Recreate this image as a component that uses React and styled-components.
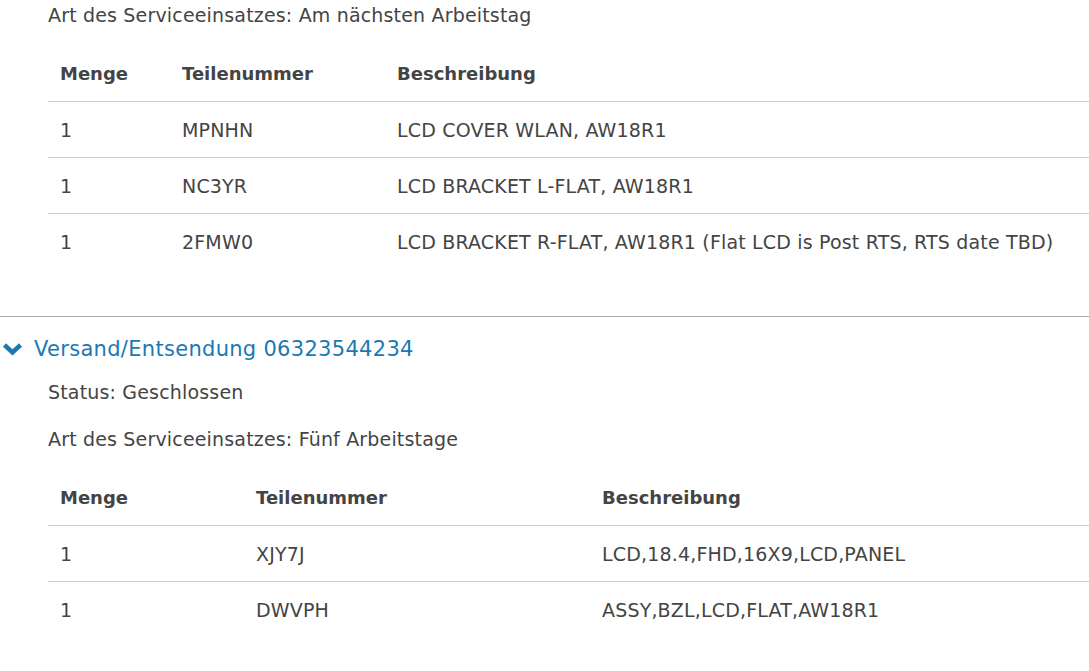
import React from 'react';
import styled, { createGlobalStyle } from 'styled-components';

const GlobalStyle = createGlobalStyle`
  html, body {
    margin: 0;
    padding: 0;
    background: #fff;
  }
  body {
    font-family: 'DejaVu Sans', 'Open Sans', sans-serif;
    font-size: 19px;
    letter-spacing: 0.17px;
    color: #444;
  }
`;

const Page = styled.div`
  width: 1089px;
  overflow: hidden;
`;

const Section = styled.section`
  border-bottom: ${(p) => (p.divider ? '1px solid #a9a9a9' : 'none')};
  padding-bottom: ${(p) => (p.divider ? '47px' : '0')};
`;

const Field = styled.p`
  margin: ${(p) => p.top || 0}px 0 0 48px;
  line-height: 30px;
`;

const Heading = styled.h3`
  display: flex;
  align-items: center;
  gap: 11px;
  margin: 17px 0 0 2px;
  line-height: 30px;
  font-size: 21px;
  font-weight: 400;
  letter-spacing: 0.3px;
  color: #1a79b3;
`;

const Table = styled.table`
  margin: 16px 0 0 48px;
  width: 1100px;
  border-collapse: collapse;
  table-layout: fixed;
`;

const Th = styled.th`
  height: 55px;
  padding: 0 12px;
  text-align: left;
  font-size: 18px;
  font-weight: 700;
  letter-spacing: 0;
  border-bottom: 1px solid #cfcfcf;
`;

const Td = styled.td`
  height: 55px;
  padding: 0 12px;
  border-bottom: ${(p) => (p.last ? 'none' : '1px solid #cfcfcf')};
  white-space: nowrap;
`;

function Chevron() {
  return (
    <svg width="21" height="14" viewBox="0 0 21 14">
      <polyline
        points="2.5,3 10.5,10.5 18.5,3"
        fill="none"
        stroke="#1a79b3"
        strokeWidth="4.5"
      />
    </svg>
  );
}

function Parts({ cols, rows }) {
  return (
    <Table>
      <colgroup>
        <col style={{ width: cols[0] }} />
        <col style={{ width: cols[1] }} />
        <col />
      </colgroup>
      <thead>
        <tr>
          <Th>Menge</Th>
          <Th>Teilenummer</Th>
          <Th>Beschreibung</Th>
        </tr>
      </thead>
      <tbody>
        {rows.map((r, i) => (
          <tr key={r[1]}>
            {r.map((c, j) => (
              <Td key={j} last={i === rows.length - 1}>
                {c}
              </Td>
            ))}
          </tr>
        ))}
      </tbody>
    </Table>
  );
}

const first = [
  ['1', 'MPNHN', 'LCD COVER WLAN, AW18R1'],
  ['1', 'NC3YR', 'LCD BRACKET L-FLAT, AW18R1'],
  ['1', '2FMW0', 'LCD BRACKET R-FLAT, AW18R1 (Flat LCD is Post RTS, RTS date TBD)'],
];

const second = [
  ['1', 'XJY7J', 'LCD,18.4,FHD,16X9,LCD,PANEL'],
  ['1', 'DWVPH', 'ASSY,BZL,LCD,FLAT,AW18R1'],
];

export default function App() {
  return (
    <Page>
      <GlobalStyle />
      <Section divider>
        <Field>Art des Serviceeinsatzes: Am nächsten Arbeitstag</Field>
        <Parts cols={[122, 215]} rows={first} />
      </Section>
      <Section>
        <Heading>
          <Chevron />
          Versand/Entsendung 06323544234
        </Heading>
        <Field top={13}>Status: Geschlossen</Field>
        <Field top={17}>Art des Serviceeinsatzes: Fünf Arbeitstage</Field>
        <Parts cols={[196, 346]} rows={second} />
      </Section>
    </Page>
  );
}
